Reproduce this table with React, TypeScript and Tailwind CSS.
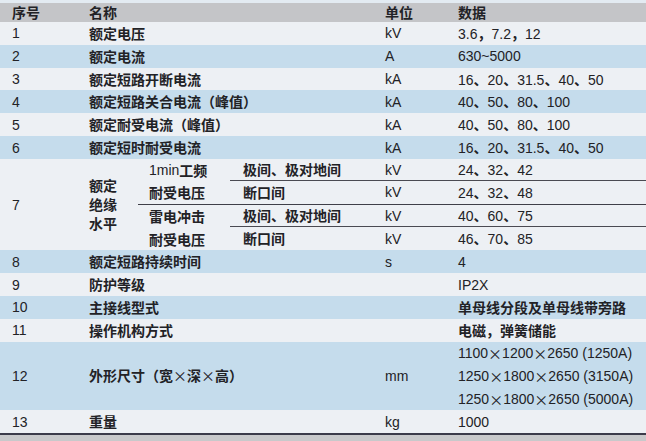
import React from "react";

function T({ s }: { s: string }) {
  const parts = s.split(/([\u00d7]|[\u3000-\uffff]+)/).filter((p) => p !== "");
  return (
    <>
      {parts.map((p, i) => {
        if (p === "\u00d7")
          return (
            <span key={i} className="font-['Noto_Sans_CJK_SC',sans-serif] font-normal">
              {p}
            </span>
          );
        if (/[\u3000-\uffff]/.test(p))
          return (
            <span key={i} className="font-['Noto_Sans_CJK_SC',sans-serif] font-bold">
              {p}
            </span>
          );
        return (
          <span key={i} className="font-['Liberation_Sans',sans-serif] font-normal">
            {p}
          </span>
        );
      })}
    </>
  );
}

type R = { no: string; name: string; unit: string; data: string };

const WHITE = "bg-[#edf0f4]";
const BLUE = "bg-[#c5dcec]";

function Row({ r, bg }: { r: R; bg: string }) {
  return (
    <div className={`flex items-center h-[22.83px] ${bg}`}>
      <div className="w-[89px] pl-[12px] shrink-0">
        <T s={r.no} />
      </div>
      <div className="w-[296px] shrink-0 whitespace-nowrap">
        <T s={r.name} />
      </div>
      <div className="w-[73px] shrink-0">
        <T s={r.unit} />
      </div>
      <div className="flex-1 whitespace-nowrap">
        <T s={r.data} />
      </div>
    </div>
  );
}

function SubRow({ a, unit, data, border }: { a: string; unit: string; data: string; border: boolean }) {
  return (
    <div
      className={`flex items-center h-[22.83px] ${border ? "border-b border-[#4a4a52]" : ""}`}
    >
      <div className="w-[155px] pl-[13px] shrink-0 whitespace-nowrap">
        <T s={a} />
      </div>
      <div className="w-[73px] shrink-0">
        <T s={unit} />
      </div>
      <div className="flex-1 whitespace-nowrap">
        <T s={data} />
      </div>
    </div>
  );
}

function Group({
  l1,
  l2,
  rows,
  border,
}: {
  l1: string;
  l2: string;
  rows: [string, string, string][];
  border: boolean;
}) {
  return (
    <div className={`flex h-[45.67px] ${border ? "border-b-[1.5px] border-[#3f3f48]" : ""}`}>
      <div className="w-[92px] pl-[11px] shrink-0 flex flex-col">
        <div className="h-[22.83px] flex items-center whitespace-nowrap">
          <T s={l1} />
        </div>
        <div className="h-[22.83px] flex items-center whitespace-nowrap">
          <T s={l2} />
        </div>
      </div>
      <div className="flex-1 flex flex-col">
        <SubRow a={rows[0][0]} unit={rows[0][1]} data={rows[0][2]} border={true} />
        <SubRow a={rows[1][0]} unit={rows[1][1]} data={rows[1][2]} border={false} />
      </div>
    </div>
  );
}

const top: R[] = [
  { no: "1", name: "额定电压", unit: "kV", data: "3.6，7.2，12" },
  { no: "2", name: "额定电流", unit: "A", data: "630~5000" },
  { no: "3", name: "额定短路开断电流", unit: "kA", data: "16、20、31.5、40、50" },
  { no: "4", name: "额定短路关合电流（峰值）", unit: "kA", data: "40、50、80、100" },
  { no: "5", name: "额定耐受电流（峰值）", unit: "kA", data: "40、50、80、100" },
  { no: "6", name: "额定短时耐受电流", unit: "kA", data: "16、20、31.5、40、50" },
];

const mid: R[] = [
  { no: "8", name: "额定短路持续时间", unit: "s", data: "4" },
  { no: "9", name: "防护等级", unit: "", data: "IP2X" },
  { no: "10", name: "主接线型式", unit: "", data: "单母线分段及单母线带旁路" },
  { no: "11", name: "操作机构方式", unit: "", data: "电磁，弹簧储能" },
];

export default function App() {
  return (
    <div className="w-[646px] h-[441px] overflow-hidden bg-[#c8c9cb] text-[14px] text-[#222226] leading-none flex flex-col">
      <div className="h-[3px] bg-[#e3ebf2] shrink-0" />
      <div className="flex items-center h-[19px] bg-[#c4c5c8] shrink-0">
        <div className="w-[89px] pl-[12px] shrink-0">
          <T s="序号" />
        </div>
        <div className="w-[296px] shrink-0">
          <T s="名称" />
        </div>
        <div className="w-[73px] shrink-0">
          <T s="单位" />
        </div>
        <div className="flex-1">
          <T s="数据" />
        </div>
      </div>
      {top.map((r, i) => (
        <Row key={r.no} r={r} bg={i % 2 === 0 ? WHITE : BLUE} />
      ))}
      <div className={`flex h-[91.33px] shrink-0 ${WHITE}`}>
        <div className="w-[89px] pl-[12px] shrink-0 flex items-center">
          <T s="7" />
        </div>
        <div className="w-[49px] shrink-0 flex flex-col justify-center leading-[18px]">
          <div>
            <T s="额定" />
          </div>
          <div>
            <T s="绝缘" />
          </div>
          <div>
            <T s="水平" />
          </div>
        </div>
        <div className="flex-1 flex flex-col">
          <Group
            l1="1min工频"
            l2="耐受电压"
            rows={[
              ["极间、极对地间", "kV", "24、32、42"],
              ["断口间", "kV", "24、32、48"],
            ]}
            border={true}
          />
          <Group
            l1="雷电冲击"
            l2="耐受电压"
            rows={[
              ["极间、极对地间", "kV", "40、60、75"],
              ["断口间", "kV", "46、70、85"],
            ]}
            border={false}
          />
        </div>
      </div>
      {mid.map((r, i) => (
        <Row key={r.no} r={r} bg={i % 2 === 0 ? BLUE : WHITE} />
      ))}
      <div className={`flex items-center h-[68.5px] shrink-0 ${BLUE}`}>
        <div className="w-[89px] pl-[12px] shrink-0">
          <T s="12" />
        </div>
        <div className="w-[296px] shrink-0 whitespace-nowrap">
          <T s="外形尺寸（宽×深×高）" />
        </div>
        <div className="w-[73px] shrink-0">
          <T s="mm" />
        </div>
        <div className="flex-1 flex flex-col whitespace-nowrap">
          <div className="h-[22.83px] flex items-center">
            <T s="1100×1200×2650 (1250A)" />
          </div>
          <div className="h-[22.83px] flex items-center">
            <T s="1250×1800×2650 (3150A)" />
          </div>
          <div className="h-[22.83px] flex items-center">
            <T s="1250×1800×2650 (5000A)" />
          </div>
        </div>
      </div>
      <Row r={{ no: "13", name: "重量", unit: "kg", data: "1000" }} bg={WHITE} />
      <div className="h-[2px] bg-[#3b3b4a] shrink-0" />
    </div>
  );
}
